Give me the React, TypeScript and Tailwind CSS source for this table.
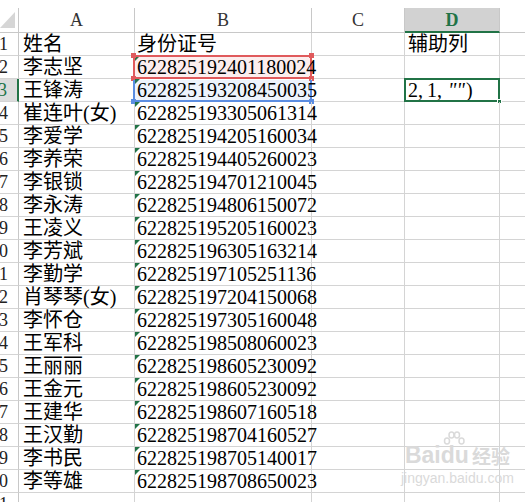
import React from 'react'

const rows: [string, string][] = [
  ['姓名', '身份证号'],
  ['李志坚', '622825192401180024'],
  ['王锋涛', '622825193208450035'],
  ['崔连叶(女)', '622825193305061314'],
  ['李爱学', '622825194205160034'],
  ['李养荣', '622825194405260023'],
  ['李银锁', '622825194701210045'],
  ['李永涛', '622825194806150072'],
  ['王凌义', '622825195205160023'],
  ['李芳斌', '622825196305163214'],
  ['李勤学', '622825197105251136'],
  ['肖琴琴(女)', '622825197204150068'],
  ['李怀仓', '622825197305160048'],
  ['王军科', '622825198508060023'],
  ['王丽丽', '622825198605230092'],
  ['王金元', '622825198605230092'],
  ['王建华', '622825198607160518'],
  ['王汉勤', '622825198704160527'],
  ['李书民', '622825198705140017'],
  ['李等雄', '622825198708650023'],
]

const font = { fontFamily: '"Liberation Serif", "Noto Sans CJK SC", serif' }

const cell = 'relative border-r border-b border-[#d4d4d4] h-[23px] leading-[22px] whitespace-nowrap text-[20px] text-black'

function Corner({ className }: { className: string }) {
  return <div className={`absolute w-[5px] h-[5px] ${className}`} />
}

export default function App() {
  return (
    <div className="w-[525px] h-[502px] overflow-hidden bg-white relative" style={font}>
      <div className="h-[8px] bg-white" />
      <div className="grid grid-cols-[19px_116px_177px_93px_95px_1fr]">
        {/* 列标题 */}
        <div className="relative h-[25px] border-r border-b border-[#c8c8c8] bg-white">
          <svg className="absolute left-0 top-[4px]" width="16" height="17" viewBox="0 0 16 17">
            <polygon points="15,0 15,16 0,16" fill="#d6d6d6" />
          </svg>
        </div>
        {['A', 'B', 'C'].map((c) => (
          <div
            key={c}
            className="h-[25px] border-r border-b border-[#c8c8c8] flex items-center justify-center text-[18px] text-[#333] pt-[1px]"
          >
            {c}
          </div>
        ))}
        <div className="h-[25px] border-r border-b-2 border-r-[#c8c8c8] border-b-[#217346] bg-[#d2d2d2] flex items-center justify-center text-[18px] font-bold text-[#217346] pt-[2px]">
          D
        </div>
        <div className="h-[25px] border-b border-[#c8c8c8]" />

        {rows.map(([name, id], i) => {
          const n = i + 1
          const active = n === 3
          return (
            <React.Fragment key={n}>
              <div
                className={`h-[23px] border-b border-[#d4d4d4] overflow-hidden flex justify-end pr-[10px] leading-[22px] text-[18px] ${
                  active
                    ? 'bg-[#dcdcdc] border-r-2 border-r-[#217346] text-[#217346]'
                    : 'border-r border-r-[#c8c8c8] text-[#222]'
                }`}
              >
                {n}
              </div>
              <div className={`${cell} pl-[4px] text-[19px]`}>{name}</div>
              <div className={`${cell} pl-[2px] z-10 ${n === 1 ? 'text-[19px]' : ''}`}>
                {n >= 2 && (
                  <svg className="absolute left-0 top-0" width="5" height="5" viewBox="0 0 5 5">
                    <polygon points="0,0 5,0 0,5" fill="#217346" />
                  </svg>
                )}
                {n === 2 && (
                  <div className="absolute -left-[2px] -top-[1px] w-[179px] h-[24px] border-2 border-[#e05a5c] bg-[#e05a5c]/10">
                    <Corner className="-left-[4px] -top-[4px] bg-[#e05a5c]" />
                    <Corner className="-right-[4px] -top-[4px] bg-[#e05a5c]" />
                    <Corner className="-left-[4px] -bottom-[4px] bg-[#e05a5c]" />
                    <Corner className="-right-[4px] -bottom-[4px] bg-[#e05a5c]" />
                  </div>
                )}
                {n === 3 && (
                  <div className="absolute -left-[2px] top-[1px] w-[179px] h-[22px] border-2 border-t-0 border-[#5b8de2] bg-[#5b8de2]/10">
                    <Corner className="-left-[4px] -bottom-[4px] bg-[#5b8de2]" />
                    <Corner className="-right-[4px] -bottom-[4px] bg-[#5b8de2]" />
                  </div>
                )}
                <span className="relative">{id}</span>
              </div>
              <div className={cell} />
              <div className={`${cell} pl-[3px] ${n === 1 ? 'text-[19px]' : ''}`}>
                {n === 1 && '辅助列'}
                {active && (
                  <>
                    <span className="relative flex">
                      <span className="inline-block w-[10px]">2</span>
                      <span className="inline-block w-[9px]">,</span>
                      <span className="inline-block w-[10px]">1</span>
                      <span className="inline-block w-[11px]">,</span>
                      <span className="inline-block w-[18px] italic">""</span>
                      <span className="inline-block w-[7px]">)</span>
                    </span>
                    <div className="absolute -left-[1px] -top-[1px] w-[96px] h-[24px] border-2 border-[#217346]">
                      <div className="absolute -right-[4px] -bottom-[4px] w-[5px] h-[5px] bg-[#217346] border border-white" />
                    </div>
                  </>
                )}
              </div>
              <div className="h-[23px] border-b border-[#d4d4d4]" />
            </React.Fragment>
          )
        })}

        {/* 第21行（部分） */}
        <div className="h-[23px] border-r border-[#c8c8c8] flex justify-end pr-[10px] leading-[22px] text-[18px] text-[#222] overflow-hidden">
          21
        </div>
        <div className="h-[23px] border-r border-[#d4d4d4]" />
        <div className="h-[23px] border-r border-[#d4d4d4]" />
        <div className="h-[23px] border-r border-[#d4d4d4]" />
        <div className="h-[23px] border-r border-[#d4d4d4]" />
        <div className="h-[23px]" />
      </div>

      {/* 百度经验水印 */}
      <div
        className="absolute left-[401px] top-[444px] z-20 flex flex-col items-center text-[#dadada] pointer-events-none"
        style={{ fontFamily: '"Liberation Sans", "Noto Sans CJK SC", sans-serif' }}
      >
        <div className="flex items-end leading-none">
          <span className="text-[23px] font-bold">Bai</span>
          <span className="relative text-[23px] font-bold">
            <svg className="absolute left-[2px] -top-[13px]" width="22" height="15" viewBox="0 0 22 15">
              <ellipse cx="4" cy="10" rx="2.5" ry="3" fill="none" stroke="#dadada" strokeWidth="1.5" />
              <ellipse cx="8.5" cy="4" rx="2.5" ry="3" fill="none" stroke="#dadada" strokeWidth="1.5" />
              <ellipse cx="14" cy="4" rx="2.5" ry="3" fill="none" stroke="#dadada" strokeWidth="1.5" />
              <ellipse cx="18.5" cy="10" rx="2.5" ry="3" fill="none" stroke="#dadada" strokeWidth="1.5" />
            </svg>
            du
          </span>
          <span className="text-[19px] font-bold ml-[3px]">经验</span>
        </div>
        <div className="text-[14px] mt-[4px] leading-none">jingyan.baidu.com</div>
      </div>
    </div>
  )
}
